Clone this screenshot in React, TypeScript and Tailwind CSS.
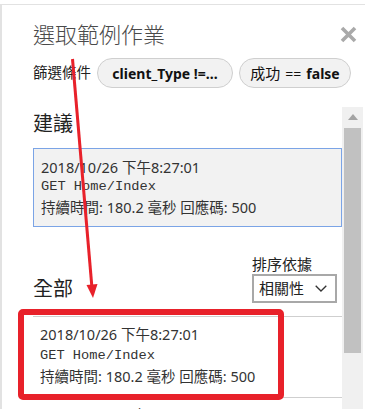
import React from "react";

function CloseIcon() {
  return (
    <svg width="17" height="17" viewBox="0 0 17 17" className="shrink-0">
      <path d="M2 2 L15 15 M15 2 L2 15" stroke="#a9a9a9" strokeWidth="3.6" strokeLinecap="butt" />
    </svg>
  );
}

function Chevron() {
  return (
    <svg width="12" height="7" viewBox="0 0 12 7">
      <path d="M0.7 0.7 L6 6 L11.3 0.7" fill="none" stroke="#333" strokeWidth="1.3" />
    </svg>
  );
}

function RequestLines({ lh }: { lh: string }) {
  return (
    <div className={`text-[14.5px] ${lh} text-[#333]`}>
      <div>2018/10/26 下午8:27:01</div>
      <div className="font-['Liberation_Mono',monospace] text-[13.7px]">GET Home/Index</div>
      <div>持續時間: 180.2 毫秒 回應碼: 500</div>
    </div>
  );
}

export default function App() {
  return (
    <div className="relative w-[365px] h-[409px] overflow-hidden bg-white font-['Noto_Sans','Noto_Sans_CJK_TC',sans-serif] text-[#222]">
      <div className="mt-[4px] h-[405px] flex flex-col border-t border-l-2 border-[#e2e2e2]">
        {/* header */}
        <div className="pl-[31px] pr-[8px]">
          <div className="mt-[14px] flex items-center justify-between h-[30px]">
            <h1 className="text-[22px] leading-[30px] font-light text-[#4a4a4a]">選取範例作業</h1>
            <CloseIcon />
          </div>
          <div className="mt-[9px] flex items-center h-[30px]">
            <span className="text-[14.5px] text-[#222]">篩選條件</span>
            <span className="ml-[6px] h-[30px] w-[136px] flex items-center justify-center rounded-full border border-[#cfcfcf] bg-[#f2f2f2] text-[14px] font-bold text-[#111]">
              client_Type !=...
            </span>
            <span className="ml-[6px] h-[30px] w-[112px] flex items-center justify-center gap-[5px] rounded-full border border-[#cfcfcf] bg-[#f2f2f2] text-[14px] text-[#111]">
              <span className="text-[15px]">成功</span>
              <span>==</span>
              <span className="font-bold">false</span>
            </span>
          </div>
        </div>

        {/* scroll area */}
        <div className="mt-[19px] flex flex-1 min-h-0">
          <div className="flex-1 min-w-0 pl-[31px] pt-[3px]">
            <h2 className="text-[20px] leading-[28px]">建議</h2>
            <div className="mt-[10px] border border-[#7ba4e6] bg-[#f2f2f2] pl-[7px] pt-[8px] pb-[9px]">
              <RequestLines lh="leading-[20px]" />
            </div>

            <div className="mt-[27px] flex items-end justify-between">
              <h2 className="text-[20px] leading-[28px]">全部</h2>
              <div className="mr-[5px] flex flex-col">
                <span className="text-[15px] leading-[20px]">排序依據</span>
                <div className="h-[29px] w-[85px] flex items-center justify-between border-2 border-[#a8a8a8] pl-[5px] pr-[8px] text-[15px]">
                  <span>相關性</span>
                  <Chevron />
                </div>
              </div>
            </div>

            <div className="mt-[13px] border-t border-[#cfcfcf] pl-[7px] pt-[7px] pb-[10px]">
              <RequestLines lh="leading-[21px]" />
            </div>
            <div className="border-t border-[#cfcfcf] pl-[7px] pt-[7px] pb-[10px]">
              <RequestLines lh="leading-[21px]" />
            </div>
          </div>

          {/* scrollbar */}
          <div className="w-[21px] mr-[2px] bg-[#f0f0f0] flex flex-col items-center">
            <svg width="10" height="6" viewBox="0 0 10 6" className="mt-[7px]">
              <path d="M0 6 L5 0 L10 6 Z" fill="#a3a3a3" />
            </svg>
            <div className="mt-[8px] h-[225px] w-[17px] bg-[#c1c1c1]" />
          </div>
        </div>
      </div>

      {/* annotations */}
      <div className="pointer-events-none absolute left-[18px] top-[309px] h-[91px] w-[266px] rounded-[5px] border-[6px] border-[#e8212a]" />
      <svg className="pointer-events-none absolute inset-0" width="365" height="409" viewBox="0 0 365 409">
        <line x1="72.5" y1="59" x2="91.8" y2="286" stroke="#e8212a" strokeWidth="3" />
        <path d="M86.5 285 L97.5 284 L93 298 Z" fill="#e8212a" />
      </svg>
    </div>
  );
}
